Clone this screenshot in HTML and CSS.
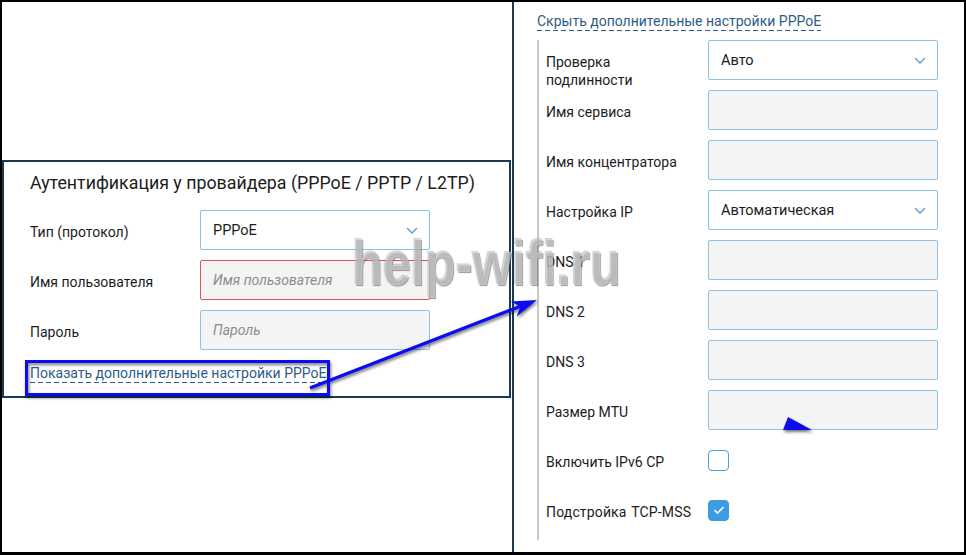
FILE: index.html
```html
<!DOCTYPE html>
<html lang="ru">
<head>
<meta charset="UTF-8">
<meta name="viewport" content="width=device-width, initial-scale=1.0">
<title>Аутентификация PPPoE</title>
<link rel="stylesheet" href="styles.css">
</head>
<body>

<div class="frame">

  <!-- Left: basic auth form -->
  <div class="left-col">
    <div class="auth-box">
      <h2 class="auth-title">Аутентификация у провайдера (PPPoE / PPTP / L2TP)</h2>

      <div class="form-row">
        <span class="row-label">Тип (протокол)</span>
        <div class="select">
          <span>PPPoE</span>
          <svg class="chevron" width="12" height="7" viewBox="0 0 12 7"><polyline points="1,1 6,6 11,1" fill="none" stroke="#5b97cc" stroke-width="1.3"/></svg>
        </div>
      </div>

      <div class="form-row">
        <span class="row-label">Имя пользователя</span>
        <input class="field field-error" type="text" placeholder="Имя пользователя">
      </div>

      <div class="form-row">
        <span class="row-label">Пароль</span>
        <input class="field" type="password" placeholder="Пароль">
      </div>

      <div class="link-line"><a class="dash-link" href="#">Показать дополнительные настройки PPPoE</a></div>
    </div>
  </div>

  <!-- Right: extended PPPoE settings -->
  <div class="right-col">
    <div class="link-line"><a class="dash-link" href="#">Скрыть дополнительные настройки PPPoE</a></div>

    <div class="extra">
      <div class="form-row">
        <span class="row-label row-label-top">Проверка подлинности</span>
        <div class="select">
          <span>Авто</span>
          <svg class="chevron" width="12" height="7" viewBox="0 0 12 7"><polyline points="1,1 6,6 11,1" fill="none" stroke="#5b97cc" stroke-width="1.3"/></svg>
        </div>
      </div>
      <div class="form-row">
        <span class="row-label">Имя сервиса</span>
        <input class="field" type="text">
      </div>
      <div class="form-row">
        <span class="row-label">Имя концентратора</span>
        <input class="field" type="text">
      </div>
      <div class="form-row">
        <span class="row-label">Настройка IP</span>
        <div class="select">
          <span>Автоматическая</span>
          <svg class="chevron" width="12" height="7" viewBox="0 0 12 7"><polyline points="1,1 6,6 11,1" fill="none" stroke="#5b97cc" stroke-width="1.3"/></svg>
        </div>
      </div>
      <div class="form-row">
        <span class="row-label">DNS 1</span>
        <input class="field" type="text">
      </div>
      <div class="form-row">
        <span class="row-label">DNS 2</span>
        <input class="field" type="text">
      </div>
      <div class="form-row">
        <span class="row-label">DNS 3</span>
        <input class="field" type="text">
      </div>
      <div class="form-row">
        <span class="row-label">Размер MTU</span>
        <input class="field" type="text">
      </div>
      <div class="form-row">
        <span class="row-label">Включить IPv6 CP</span>
        <span class="check"></span>
      </div>
      <div class="form-row">
        <span class="row-label wide">Подстройка TCP-MSS</span>
        <span class="check checked">
          <svg width="12" height="10" viewBox="0 0 12 10"><polyline points="1.5,5 4.5,8 10.5,2" fill="none" stroke="#fff" stroke-width="1.6"/></svg>
        </span>
      </div>
    </div>
  </div>

  <!-- watermark + annotation arrows drawn over the screenshot -->
  <div class="watermark">help-wifi.ru</div>

  <svg class="annot" width="966" height="555" viewBox="0 0 966 555">
    <rect x="26.5" y="361.5" width="302" height="33" fill="none" stroke="#0c0cf2" stroke-width="3"/>
    <line x1="310" y1="388" x2="521" y2="306" stroke="#0c0cf2" stroke-width="3.2"/>
    <polygon points="537,300 516.6,316.5 520.5,306.5 510.8,301.5" fill="#0c0cf2"/>
    <polygon points="788,417 812,430 783,430" fill="#0c0cf2"/>
  </svg>

</div>

</body>
</html>
```

FILE: styles.css
```css
  /* Page */
  body {
    margin: 0;
    background-color: #fff;
    font-family: 'Roboto', 'Noto Sans', sans-serif;
    color: #1c1c1c;
  }

  .frame {
    position: relative;
    display: flex;
    width: 966px;
    height: 555px;
    box-sizing: border-box;
    border-style: solid;
    border-color: #000;
    border-width: 2px 2px 3px 2px;
    overflow: hidden;
  }

  /* Left column */
  .left-col {
    width: 510px;
    flex-shrink: 0;
    padding-top: 158px;
  }

  .auth-box {
    width: 509px;
    box-sizing: border-box;
    border: 2px solid #183a55;
    padding: 10px 0 13px 26px;
  }

  .auth-title {
    margin: 0 0 16px;
    font-size: 17.8px;
    line-height: 22px;
    font-weight: normal;
    color: #1c1c1c;
  }

  /* Form rows */
  .form-row {
    display: flex;
    align-items: center;
    height: 40px;
    margin-bottom: 10px;
  }

  .auth-box .form-row:nth-of-type(3) {
    margin-bottom: 0;
  }

  .row-label {
    width: 170px;
    flex-shrink: 0;
    box-sizing: border-box;
    padding-top: 3px;
    font-size: 14px;
    line-height: 18px;
  }

  .extra .row-label {
    width: 162px;
  }

  .extra .row-label-top {
    align-self: flex-start;
    padding: 13px 30px 0 0;
  }

  .extra .wide {
    letter-spacing: 0.15px;
    word-spacing: 1px;
  }

  /* Controls */
  .select {
    display: flex;
    align-items: center;
    justify-content: space-between;
    width: 230px;
    height: 40px;
    box-sizing: border-box;
    padding: 1px 11px 0 12px;
    border: 1px solid #86c1ea;
    border-radius: 2px;
    background-color: #fff;
    font-size: 14.5px;
  }

  .field {
    width: 230px;
    height: 40px;
    box-sizing: border-box;
    margin: 0;
    padding: 0 12px;
    border: 1px solid #8cc4ec;
    border-radius: 2px;
    background-color: #f4f4f4;
    font-family: 'Roboto', sans-serif;
    font-size: 14px;
    font-style: italic;
    outline: none;
  }

  .field::placeholder {
    color: #8c8c8c;
  }

  .field-error {
    border-color: #e2505c;
  }

  /* Checkboxes */
  .check {
    display: flex;
    align-items: center;
    justify-content: center;
    width: 21px;
    height: 21px;
    box-sizing: border-box;
    border: 1px solid #4ba0de;
    border-radius: 4px;
  }

  .check.checked {
    background-color: #3d9be1;
    border-color: #3d9be1;
  }

  /* Dashed links */
  .link-line {
    font-size: 14px;
    line-height: 20px;
    margin-top: 13px;
  }

  .dash-link {
    color: #2e5c88;
    text-decoration: none;
    padding-bottom: 2px;
    background-image: repeating-linear-gradient(to right, #2e5c88 0 5px, transparent 5px 8px);
    background-size: 100% 1px;
    background-position: left bottom;
    background-repeat: no-repeat;
  }

  /* Right column */
  .right-col {
    flex: 1;
    border-left: 2px solid #183a55;
    padding: 9px 0 0 23px;
  }

  .right-col .link-line {
    margin-top: 0;
  }

  .extra {
    margin-top: 9px;
    border-left: 2px solid #c9c9c9;
    padding: 0 0 10px 7px;
  }

  .extra .form-row:last-child {
    margin-bottom: 0;
  }

  /* Watermark */
  .watermark {
    position: absolute;
    left: 350px;
    top: 226px;
    font-family: 'Liberation Sans', sans-serif;
    font-weight: bold;
    font-size: 63px;
    line-height: 70px;
    color: rgba(225, 225, 225, 0.6);
    text-shadow: 1px 1px 1px rgba(70, 70, 70, 0.55), -1px -1px 1px rgba(120, 120, 120, 0.35);
    transform: scaleX(0.8);
    transform-origin: left top;
    white-space: nowrap;
    pointer-events: none;
  }

  /* Annotation overlay */
  .annot {
    position: absolute;
    left: -2px;
    top: -2px;
    pointer-events: none;
    filter: drop-shadow(1px 2px 1.5px rgba(0, 0, 0, 0.55));
  }
```
